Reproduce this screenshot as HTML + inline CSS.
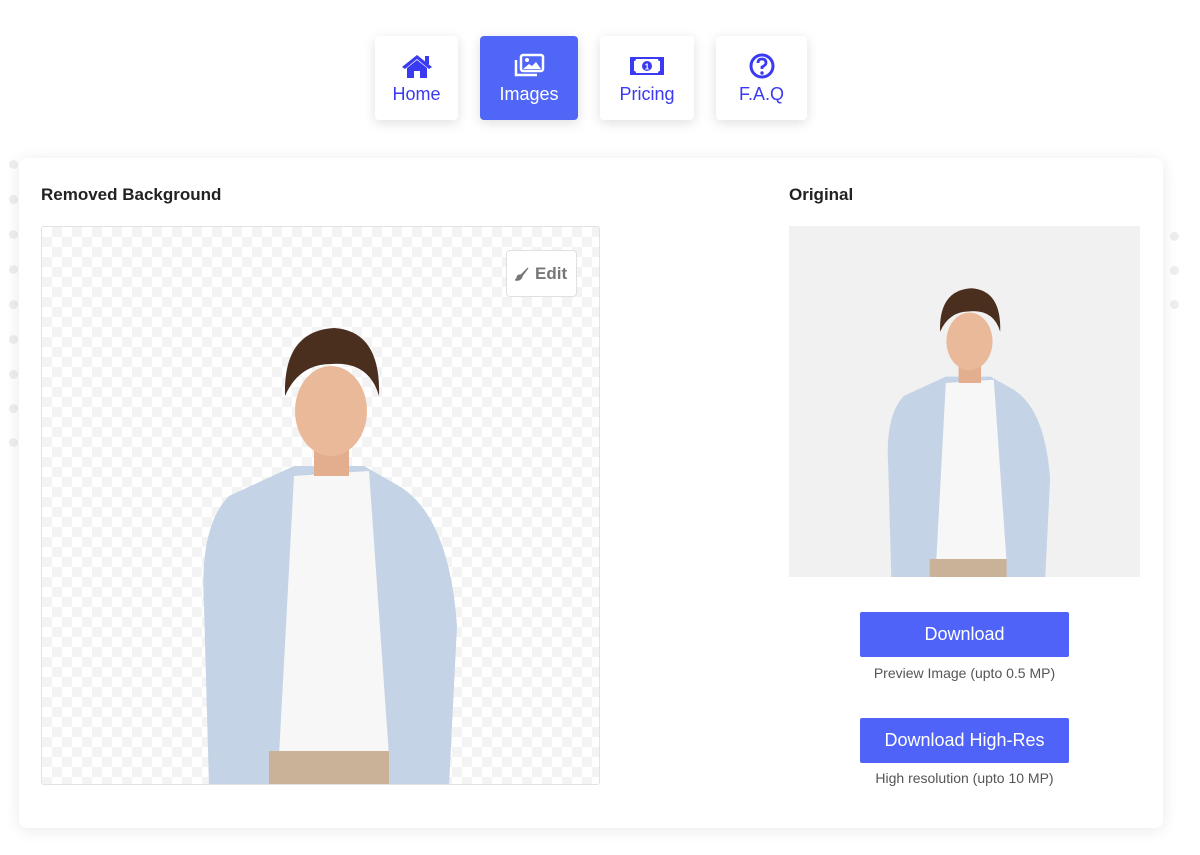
<!DOCTYPE html>
<html><head><meta charset="utf-8"><style>
*{box-sizing:border-box;margin:0;padding:0}
body{width:1200px;height:855px;background:#fff;font-family:"Liberation Sans",sans-serif;position:relative;overflow:hidden}
.nav{position:absolute;top:36px;height:84px;background:#fff;border-radius:4px;box-shadow:0 3px 12px rgba(0,0,0,.13);color:#3a3af2;text-align:center;font-size:18px}
.nav svg{display:block;margin:17px auto 5px}
.nav.act{background:#4f66f6;color:#fff}
.card{position:absolute;left:19px;top:158px;width:1144px;height:670px;background:#fff;border-radius:8px;box-shadow:0 2px 16px rgba(0,0,0,.09)}
h3{position:absolute;font-size:17px;font-weight:bold;color:#222}
.box{position:absolute;left:41px;top:226px;width:559px;height:559px;border:1px solid #e2e2e2;border-radius:3px;overflow:hidden;
background-color:#fff;background-image:linear-gradient(45deg,#f3f3f3 25%,transparent 25%,transparent 75%,#f3f3f3 75%),linear-gradient(45deg,#f3f3f3 25%,transparent 25%,transparent 75%,#f3f3f3 75%);background-size:20px 20px;background-position:0 0,10px 10px}
.edit{position:absolute;left:506px;top:250px;width:71px;height:47px;border:1px solid #e0e0e0;border-radius:4px;background:#fff;color:#777;font-weight:bold;font-size:17px;line-height:45px;padding-left:28px}
.orig{position:absolute;left:789px;top:226px;width:351px;height:351px;background:#f1f1f1;overflow:hidden}
.btn{position:absolute;left:860px;width:209px;height:45px;background:#4f63f8;color:#fff;font-size:18px;text-align:center;line-height:45px;border-radius:2px}
.cap{position:absolute;left:820px;width:289px;text-align:center;font-size:14px;color:#555}
.dot{position:absolute;width:9px;height:9px;border-radius:50%;background:#eee}
</style></head><body>
<div class="dot" style="left:9px;top:160px"></div><div class="dot" style="left:9px;top:195px"></div><div class="dot" style="left:9px;top:230px"></div><div class="dot" style="left:9px;top:265px"></div><div class="dot" style="left:9px;top:300px"></div><div class="dot" style="left:9px;top:335px"></div><div class="dot" style="left:9px;top:370px"></div><div class="dot" style="left:9px;top:404px"></div><div class="dot" style="left:9px;top:438px"></div>
<div class="dot" style="left:1170px;top:232px"></div><div class="dot" style="left:1170px;top:266px"></div><div class="dot" style="left:1170px;top:300px"></div>

<div class="nav" style="left:375px;width:83px"><svg width="34" height="26" viewBox="0 0 34 26"><path d="M17 2 L2 14 L5 16 L17 6 L29 16 L32 14 Z" fill="#3a3af2"/><rect x="25" y="3" width="4" height="8" fill="#3a3af2"/><path d="M7 15 L17 7 L27 15 V25 H20 V18 H14 V25 H7 Z" fill="#3a3af2"/></svg>Home</div>
<div class="nav act" style="left:480px;width:98px"><svg width="34" height="26" viewBox="0 0 34 26"><rect x="9" y="2" width="22" height="16" rx="2" fill="none" stroke="#fff" stroke-width="2.5"/><path d="M4 7 V22 H25" fill="none" stroke="#fff" stroke-width="2.5"/><circle cx="15" cy="7" r="2" fill="#fff"/><path d="M11 16 L17 11 L20 13 L24 9 L29 16 Z" fill="#fff"/></svg>Images</div>
<div class="nav" style="left:600px;width:94px"><svg width="36" height="26" viewBox="0 0 36 26"><rect x="1" y="4" width="34" height="18" fill="#3a3af2"/><path d="M5 8 Q7 8 7 6 H29 Q29 8 31 8 V18 Q29 18 29 20 H7 Q7 18 5 18 Z" fill="#fff"/><circle cx="18" cy="13" r="5" fill="#3a3af2"/><text x="18" y="16.5" font-size="8" fill="#fff" text-anchor="middle" font-weight="bold" font-family="Liberation Sans">1</text></svg>Pricing</div>
<div class="nav" style="left:716px;width:91px"><svg width="30" height="26" viewBox="0 0 30 26"><circle cx="15" cy="13" r="11" fill="none" stroke="#3a3af2" stroke-width="3"/><path d="M11 10 Q11 6 15 6 Q19 6 19 10 Q19 12 15 14 V16" fill="none" stroke="#3a3af2" stroke-width="2.8"/><circle cx="15" cy="20" r="1.7" fill="#3a3af2"/></svg>F.A.Q</div>

<div class="card"></div>
<h3 style="left:41px;top:185px">Removed Background</h3>
<h3 style="left:789px;top:185px">Original</h3>

<div class="box"><svg width="559" height="559" style="position:absolute;left:0;top:0"><g transform="translate(157,99)">
<path d="M95 140 L30 170 Q0 200 5 280 L10 460 L250 460 L258 300 Q250 190 200 160 L165 140 Z" fill="#c5d3e6"/>
<path d="M95 150 L170 145 L190 430 L80 430 Z" fill="#f7f7f7"/>
<rect x="70" y="425" width="120" height="40" fill="#c9b298"/>
<rect x="115" y="115" width="35" height="35" fill="#e2ae8e"/>
<ellipse cx="132" cy="85" rx="36" ry="45" fill="#e9b99a"/>
<path d="M86 70 Q84 5 135 2 Q182 5 180 70 Q170 35 132 38 Q100 38 86 70 Z" fill="#4a2e1e"/>
</g></svg></div>
<div class="edit"><svg width="14" height="14" viewBox="0 0 14 14" style="position:absolute;left:8px;top:16px"><path d="M13 1 L6 8 L7 9 Z M5 8 Q2 8 2 11 Q2 12 0 13 Q5 14 7 10 Z" fill="#777" stroke="#777" stroke-width="1.2"/></svg>Edit</div>

<div class="orig"><svg width="351" height="351" style="position:absolute;left:0;top:0"><g transform="translate(96,61) scale(0.64)">
<path d="M95 140 L30 170 Q0 200 5 280 L10 460 L250 460 L258 300 Q250 190 200 160 L165 140 Z" fill="#c5d3e6"/>
<path d="M95 150 L170 145 L190 430 L80 430 Z" fill="#f7f7f7"/>
<rect x="70" y="425" width="120" height="40" fill="#c9b298"/>
<rect x="115" y="115" width="35" height="35" fill="#e2ae8e"/>
<ellipse cx="132" cy="85" rx="36" ry="45" fill="#e9b99a"/>
<path d="M86 70 Q84 5 135 2 Q182 5 180 70 Q170 35 132 38 Q100 38 86 70 Z" fill="#4a2e1e"/>
</g></svg></div>

<div class="btn" style="top:612px">Download</div>
<div class="cap" style="top:665px">Preview Image (upto 0.5 MP)</div>
<div class="btn" style="top:718px">Download High-Res</div>
<div class="cap" style="top:770px">High resolution (upto 10 MP)</div>
</body></html>
